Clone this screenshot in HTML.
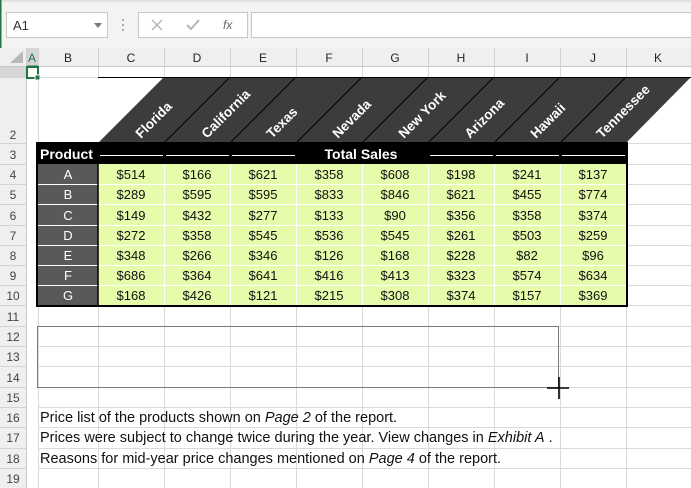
<!DOCTYPE html>
<html><head><meta charset="utf-8"><style>
html,body{margin:0;padding:0;width:691px;height:488px;overflow:hidden;background:#fff}
svg{display:block}
text{font-family:"Liberation Sans",sans-serif}
</style></head><body>
<svg width="691" height="488" viewBox="0 0 691 488" xmlns="http://www.w3.org/2000/svg">
<rect x="0" y="0" width="691" height="48" fill="#f3f3f3"/>
<rect x="0" y="0" width="691" height="2" fill="#e1e1e1"/>
<rect x="0" y="0" width="1.5" height="488" fill="#217346"/>
<rect x="6.5" y="12.5" width="101" height="25" fill="#fff" stroke="#c6c6c6"/>
<text x="13" y="30" font-size="13" fill="#333">A1</text>
<path d="M94 23 L102 23 L98 28 Z" fill="#777"/>
<g fill="#aaa"><rect x="122" y="19" width="2" height="2"/><rect x="122" y="24" width="2" height="2"/><rect x="122" y="29" width="2" height="2"/></g>
<rect x="138.5" y="12.5" width="109" height="25" fill="#fff" stroke="#c6c6c6"/>
<path d="M152 20 L162 30 M162 20 L152 30" stroke="#b5b5b5" stroke-width="1.5"/>
<path d="M187 25 L191 29 L199 20" stroke="#b5b5b5" stroke-width="2" fill="none"/>
<text x="223" y="29" font-size="12" font-style="italic" font-family="Liberation Serif" fill="#666">fx</text>
<rect x="251.5" y="12.5" width="445" height="25" fill="#fff" stroke="#c6c6c6"/>
<rect x="0" y="48" width="691" height="19" fill="#efefef"/>
<line x1="0" y1="66.5" x2="691" y2="66.5" stroke="#c8c8c8"/>
<path d="M10 63 L23 63 L23 51 Z" fill="#b8b8b8"/>
<rect x="26" y="48" width="12" height="19" fill="#d6d6d6"/>
<line x1="26" y1="66.5" x2="38" y2="66.5" stroke="#217346" stroke-width="2"/>
<g stroke="#d0d0d0">
<line x1="26.5" y1="48" x2="26.5" y2="67"/><line x1="38.5" y1="48" x2="38.5" y2="67"/>
<line x1="98.5" y1="48" x2="98.5" y2="67"/><line x1="164.5" y1="48" x2="164.5" y2="67"/>
<line x1="230.5" y1="48" x2="230.5" y2="67"/><line x1="296.5" y1="48" x2="296.5" y2="67"/>
<line x1="362.5" y1="48" x2="362.5" y2="67"/><line x1="428.5" y1="48" x2="428.5" y2="67"/>
<line x1="494.5" y1="48" x2="494.5" y2="67"/><line x1="560.5" y1="48" x2="560.5" y2="67"/>
<line x1="626.5" y1="48" x2="626.5" y2="67"/>
</g>
<g font-size="12" fill="#222" text-anchor="middle">
<text x="32" y="62" fill="#217346">A</text><text x="68" y="62">B</text><text x="131" y="62">C</text>
<text x="197" y="62">D</text><text x="263" y="62">E</text><text x="329" y="62">F</text>
<text x="395" y="62">G</text><text x="461" y="62">H</text><text x="527" y="62">I</text>
<text x="593" y="62">J</text><text x="658" y="62">K</text>
</g>
<rect x="0" y="67" width="26" height="421" fill="#efefef"/>
<line x1="26.5" y1="67" x2="26.5" y2="488" stroke="#c8c8c8"/>
<g stroke="#d4d4d4">
<line x1="0" y1="77.5" x2="26" y2="77.5"/><line x1="0" y1="143.5" x2="26" y2="143.5"/>
<line x1="0" y1="164.5" x2="26" y2="164.5"/><line x1="0" y1="184.5" x2="26" y2="184.5"/>
<line x1="0" y1="204.5" x2="26" y2="204.5"/><line x1="0" y1="225.5" x2="26" y2="225.5"/>
<line x1="0" y1="245.5" x2="26" y2="245.5"/><line x1="0" y1="265.5" x2="26" y2="265.5"/>
<line x1="0" y1="285.5" x2="26" y2="285.5"/><line x1="0" y1="305.5" x2="26" y2="305.5"/>
<line x1="0" y1="326.5" x2="26" y2="326.5"/><line x1="0" y1="346.5" x2="26" y2="346.5"/>
<line x1="0" y1="366.5" x2="26" y2="366.5"/><line x1="0" y1="387.5" x2="26" y2="387.5"/>
<line x1="0" y1="407.5" x2="26" y2="407.5"/><line x1="0" y1="427.5" x2="26" y2="427.5"/>
<line x1="0" y1="448.5" x2="26" y2="448.5"/><line x1="0" y1="468.5" x2="26" y2="468.5"/>
</g>
<rect x="0" y="67" width="26" height="10" fill="#d6d6d6"/>
<g font-size="12" fill="#444" text-anchor="middle">
<text x="13" y="139">2</text><text x="13" y="159">3</text><text x="13" y="179">4</text>
<text x="13" y="199">5</text><text x="13" y="220">6</text><text x="13" y="240">7</text>
<text x="13" y="260">8</text><text x="13" y="280">9</text><text x="13" y="300">10</text>
<text x="13" y="321">11</text><text x="13" y="341">12</text><text x="13" y="361">13</text>
<text x="13" y="382">14</text><text x="13" y="402">15</text><text x="13" y="422">16</text>
<text x="13" y="442">17</text><text x="13" y="463">18</text><text x="13" y="483">19</text>
</g>
<g stroke="#dadada">
<line x1="27" y1="77.5" x2="691" y2="77.5"/>
<line x1="38.5" y1="67" x2="38.5" y2="488"/>
<line x1="98.5" y1="67" x2="98.5" y2="77"/><line x1="164.5" y1="67" x2="164.5" y2="77"/>
<line x1="230.5" y1="67" x2="230.5" y2="77"/><line x1="296.5" y1="67" x2="296.5" y2="77"/>
<line x1="362.5" y1="67" x2="362.5" y2="77"/><line x1="428.5" y1="67" x2="428.5" y2="77"/>
<line x1="494.5" y1="67" x2="494.5" y2="77"/><line x1="560.5" y1="67" x2="560.5" y2="77"/>
<line x1="626.5" y1="67" x2="626.5" y2="488"/>
<line x1="98.5" y1="306" x2="98.5" y2="488"/><line x1="164.5" y1="306" x2="164.5" y2="488"/>
<line x1="230.5" y1="306" x2="230.5" y2="488"/><line x1="296.5" y1="306" x2="296.5" y2="488"/>
<line x1="362.5" y1="306" x2="362.5" y2="488"/><line x1="428.5" y1="306" x2="428.5" y2="488"/>
<line x1="494.5" y1="306" x2="494.5" y2="488"/><line x1="560.5" y1="306" x2="560.5" y2="488"/>
<line x1="38" y1="326.5" x2="691" y2="326.5"/><line x1="38" y1="346.5" x2="691" y2="346.5"/>
<line x1="38" y1="366.5" x2="691" y2="366.5"/><line x1="38" y1="387.5" x2="691" y2="387.5"/>
<line x1="38" y1="407.5" x2="691" y2="407.5"/><line x1="38" y1="427.5" x2="691" y2="427.5"/>
<line x1="38" y1="448.5" x2="691" y2="448.5"/><line x1="38" y1="468.5" x2="691" y2="468.5"/>
<line x1="626" y1="143.5" x2="691" y2="143.5"/><line x1="626" y1="164.5" x2="691" y2="164.5"/>
<line x1="626" y1="184.5" x2="691" y2="184.5"/><line x1="626" y1="204.5" x2="691" y2="204.5"/>
<line x1="626" y1="225.5" x2="691" y2="225.5"/><line x1="626" y1="245.5" x2="691" y2="245.5"/>
<line x1="626" y1="265.5" x2="691" y2="265.5"/><line x1="626" y1="285.5" x2="691" y2="285.5"/>
<line x1="626" y1="305.5" x2="691" y2="305.5"/>
</g>
<rect x="27" y="67" width="11" height="11" fill="none" stroke="#217346" stroke-width="2"/>
<rect x="35" y="75" width="5" height="5" fill="#217346" stroke="#fff" stroke-width="1"/>
<polygon points="98,143 164,77 691,77 626,143" fill="#3d3b3c"/>
<g stroke="#000" stroke-width="1">
<line x1="164" y1="143" x2="230" y2="77"/><line x1="230" y1="143" x2="296" y2="77"/>
<line x1="296" y1="143" x2="362" y2="77"/><line x1="362" y1="143" x2="428" y2="77"/>
<line x1="428" y1="143" x2="494" y2="77"/><line x1="494" y1="143" x2="560" y2="77"/>
<line x1="560" y1="143" x2="626" y2="77"/>
</g>
<line x1="98" y1="77.5" x2="691" y2="77.5" stroke="#000" stroke-width="1"/>
<g font-size="13.5" font-weight="bold" fill="#fff">
<text transform="translate(141,139) rotate(-45)">Florida</text>
<text transform="translate(207,139) rotate(-45)">California</text>
<text transform="translate(272,139) rotate(-45)">Texas</text>
<text transform="translate(338,139) rotate(-45)">Nevada</text>
<text transform="translate(404,139) rotate(-45)">New York</text>
<text transform="translate(470,139) rotate(-45)">Arizona</text>
<text transform="translate(536,139) rotate(-45)">Hawaii</text>
<text transform="translate(602,139) rotate(-45)">Tennessee</text>
</g>
<rect x="37" y="143" width="590" height="163" fill="#000"/>
<rect x="38" y="164" width="60" height="141" fill="#595959"/>
<rect x="98" y="164" width="528" height="141" fill="#e6fcab"/>
<g stroke="#fff" stroke-width="1">
<line x1="38" y1="184.5" x2="626" y2="184.5"/><line x1="38" y1="204.5" x2="626" y2="204.5"/>
<line x1="38" y1="225.5" x2="626" y2="225.5"/><line x1="38" y1="245.5" x2="626" y2="245.5"/>
<line x1="38" y1="265.5" x2="626" y2="265.5"/><line x1="38" y1="285.5" x2="626" y2="285.5"/>
<line x1="164.5" y1="164" x2="164.5" y2="305"/><line x1="230.5" y1="164" x2="230.5" y2="305"/>
<line x1="296.5" y1="164" x2="296.5" y2="305"/><line x1="362.5" y1="164" x2="362.5" y2="305"/>
<line x1="428.5" y1="164" x2="428.5" y2="305"/><line x1="494.5" y1="164" x2="494.5" y2="305"/>
<line x1="560.5" y1="164" x2="560.5" y2="305"/>
<line x1="100" y1="155.5" x2="163" y2="155.5"/><line x1="166" y1="155.5" x2="229" y2="155.5"/>
<line x1="232" y1="155.5" x2="295" y2="155.5"/><line x1="430" y1="155.5" x2="493" y2="155.5"/>
<line x1="496" y1="155.5" x2="559" y2="155.5"/><line x1="562" y1="155.5" x2="625" y2="155.5"/>
</g>
<line x1="98" y1="164" x2="98" y2="305" stroke="#000" stroke-width="1.5"/>
<rect x="37" y="143" width="590" height="163" fill="none" stroke="#000" stroke-width="2"/>
<g font-size="14" font-weight="bold" fill="#fff">
<text x="40" y="159">Product</text>
<text x="361" y="159" text-anchor="middle">Total Sales</text>
</g>
<g font-size="13" fill="#fff" text-anchor="middle">
<text x="68" y="179">A</text><text x="68" y="199">B</text><text x="68" y="220">C</text>
<text x="68" y="240">D</text><text x="68" y="260">E</text><text x="68" y="280">F</text><text x="68" y="300">G</text>
</g>
<g font-size="13" fill="#111" text-anchor="middle">
<text x="131" y="179">$514</text><text x="197" y="179">$166</text><text x="263" y="179">$621</text><text x="329" y="179">$358</text><text x="395" y="179">$608</text><text x="461" y="179">$198</text><text x="527" y="179">$241</text><text x="593" y="179">$137</text>
<text x="131" y="199">$289</text><text x="197" y="199">$595</text><text x="263" y="199">$595</text><text x="329" y="199">$833</text><text x="395" y="199">$846</text><text x="461" y="199">$621</text><text x="527" y="199">$455</text><text x="593" y="199">$774</text>
<text x="131" y="220">$149</text><text x="197" y="220">$432</text><text x="263" y="220">$277</text><text x="329" y="220">$133</text><text x="395" y="220">$90</text><text x="461" y="220">$356</text><text x="527" y="220">$358</text><text x="593" y="220">$374</text>
<text x="131" y="240">$272</text><text x="197" y="240">$358</text><text x="263" y="240">$545</text><text x="329" y="240">$536</text><text x="395" y="240">$545</text><text x="461" y="240">$261</text><text x="527" y="240">$503</text><text x="593" y="240">$259</text>
<text x="131" y="260">$348</text><text x="197" y="260">$266</text><text x="263" y="260">$346</text><text x="329" y="260">$126</text><text x="395" y="260">$168</text><text x="461" y="260">$228</text><text x="527" y="260">$82</text><text x="593" y="260">$96</text>
<text x="131" y="280">$686</text><text x="197" y="280">$364</text><text x="263" y="280">$641</text><text x="329" y="280">$416</text><text x="395" y="280">$413</text><text x="461" y="280">$323</text><text x="527" y="280">$574</text><text x="593" y="280">$634</text>
<text x="131" y="300">$168</text><text x="197" y="300">$426</text><text x="263" y="300">$121</text><text x="329" y="300">$215</text><text x="395" y="300">$308</text><text x="461" y="300">$374</text><text x="527" y="300">$157</text><text x="593" y="300">$369</text>
</g>
<rect x="37.5" y="326.5" width="521" height="61" fill="none" stroke="#7a7a7a"/>
<path d="M547 388 L569 388 M559 377 L559 399" stroke="#000" stroke-width="1.6"/>
<g font-size="14.5" fill="#111">
<text x="40" y="422">Price list of the products shown on <tspan font-style="italic">Page 2</tspan> of the report.</text>
<text x="40" y="442">Prices were subject to change twice during the year. View changes in <tspan font-style="italic">Exhibit A</tspan> .</text>
<text x="40" y="463">Reasons for mid-year price changes mentioned on <tspan font-style="italic">Page 4</tspan> of the report.</text>
</g>
</svg>
</body></html>
